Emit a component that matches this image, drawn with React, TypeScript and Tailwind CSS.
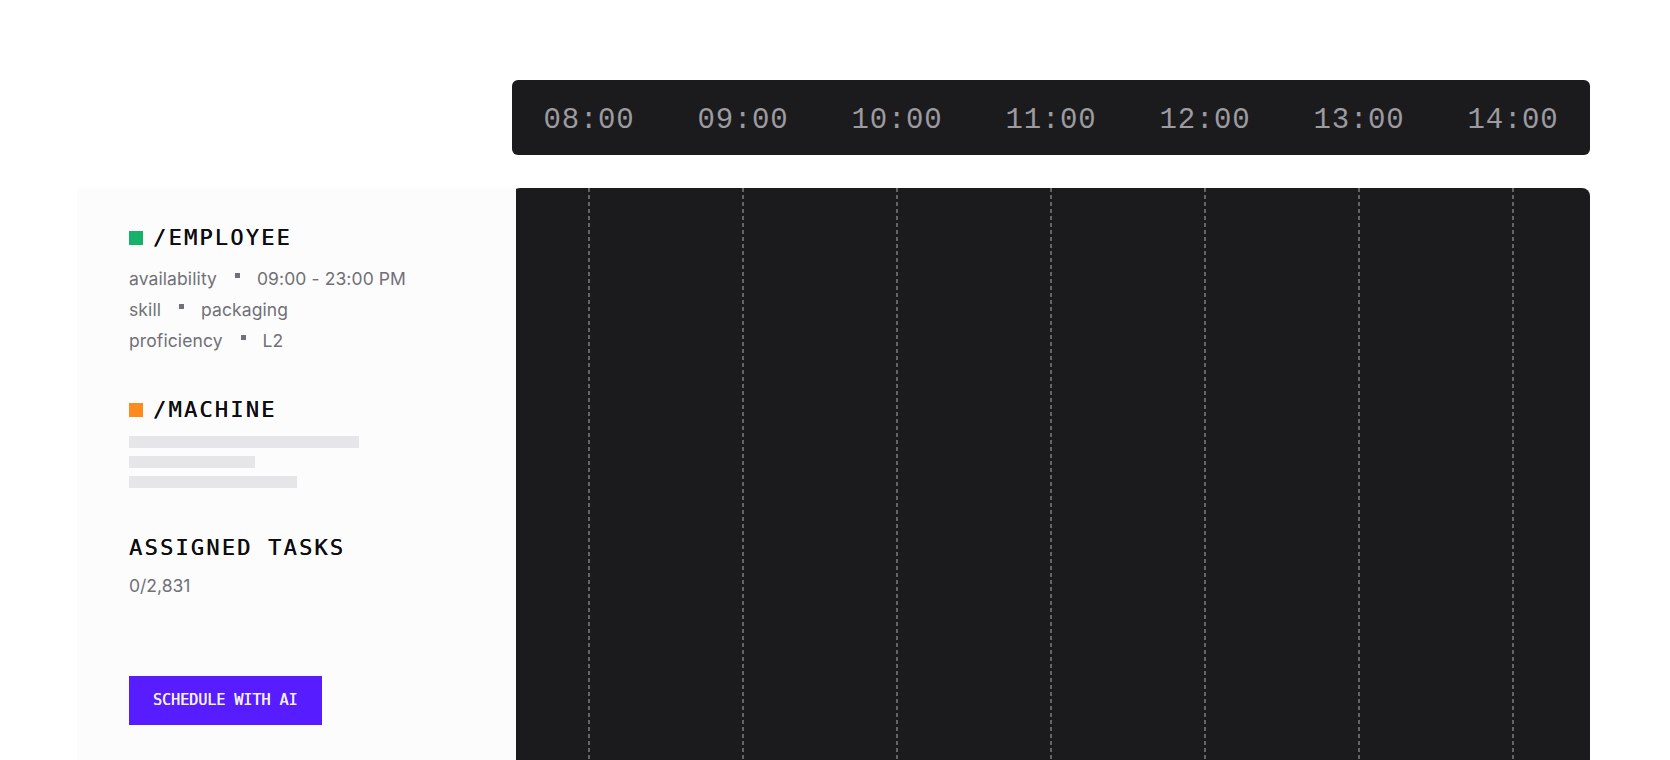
import React from "react";

const hours = ["08:00", "09:00", "10:00", "11:00", "12:00", "13:00", "14:00"];

const employee = [
  { label: "availability", value: "09:00 - 23:00 PM" },
  { label: "skill", value: "packaging" },
  { label: "proficiency", value: "L2" },
];

const mono = "font-['DejaVu_Sans_Mono',monospace]";

const Heading = ({ color, children }: { color?: string; children: React.ReactNode }) => (
  <div className={`flex items-center gap-[10px] h-[28px] ${mono} text-[22px] leading-[28px] tracking-[2.2px] text-[#0e0d10]`}>
    {color && <span className={`w-[14px] h-[14px] ${color}`} />}
    <span className="[text-shadow:0.3px_0_0_#0e0d10]">{children}</span>
  </div>
);

const DetailRow = ({ label, value }: { label: string; value: string }) => (
  <div className="flex items-start gap-[18px] h-[31px] leading-[31px]">
    <span>{label}</span>
    <span className="mt-[10px] w-[5px] h-[5px] bg-[#727177]" />
    <span className="-ml-px">{value}</span>
  </div>
);

const App = () => {
  return (
    <div className="h-screen overflow-hidden bg-white">
      <div className="grid grid-cols-[435px_1078px] gap-y-[33px] pl-[77px] pt-20">
        <div />
        <div className="grid grid-cols-7 h-[75px] items-center pt-[6px] rounded-md bg-[#1b1a1d]">
          {hours.map((h) => (
            <span
              key={h}
              className="text-center font-['Liberation_Mono',monospace] text-[29px] tracking-[0.8px] text-[#9c9ba0]"
            >
              {h}
            </span>
          ))}
        </div>

        <aside className="relative z-10 -mr-1 h-[600px] bg-[#fcfcfd] pl-[52px] pt-9 font-['Inter',sans-serif] text-[17.5px] text-[#717076]">
          <Heading color="bg-[#16b26b]">/EMPLOYEE</Heading>
          <div className="mt-[11px] tracking-[0.1px]">
            {employee.map((row) => (
              <DetailRow key={row.label} {...row} />
            ))}
          </div>

          <div className="mt-10">
            <Heading color="bg-[#ff8a1e]">/MACHINE</Heading>
          </div>
          <div className="mt-3 flex flex-col gap-2">
            <div className="w-[230px] h-3 bg-[#e6e5e8]" />
            <div className="w-[126px] h-3 bg-[#e6e5e8]" />
            <div className="w-[168px] h-3 bg-[#e6e5e8]" />
          </div>

          <div className="mt-[46px]">
            <Heading>ASSIGNED TASKS</Heading>
          </div>
          <div className="mt-[8px] leading-[31px]">0/2,831</div>

          <button className={`mt-[75px] h-[49px] px-6 bg-[#571cff] ${mono} text-[15px] text-[#f3f0ff] [text-shadow:0.3px_0_0_#f3f0ff]`}>
            SCHEDULE WITH AI
          </button>
        </aside>

        <main className="grid grid-cols-7 h-[600px] rounded-t-lg bg-[#1b1a1d]">
          {hours.map((h) => (
            <div key={h} className="flex justify-center">
              <div className="w-[2px] h-full bg-[repeating-linear-gradient(to_bottom,#646368_0_4px,transparent_4px_7px)]" />
            </div>
          ))}
        </main>
      </div>
    </div>
  );
};

export default App;
